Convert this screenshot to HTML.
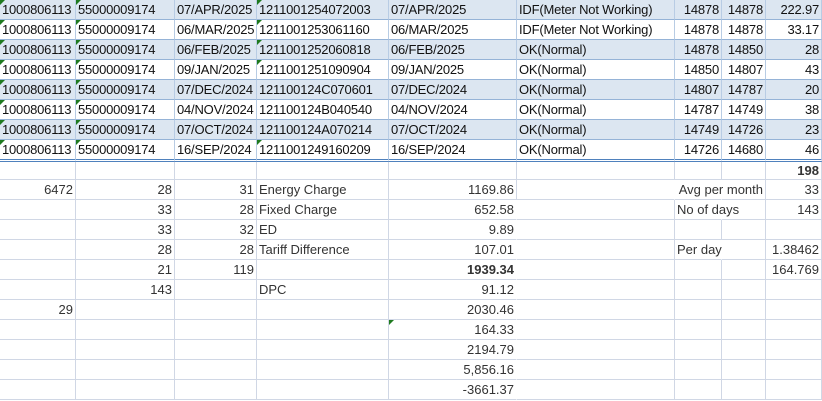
<!DOCTYPE html>
<html><head><meta charset="utf-8"><style>
*{box-sizing:border-box;margin:0;padding:0}
body{width:822px;height:401px;overflow:hidden;background:#fff;font-family:"Liberation Sans",Arial,sans-serif;font-size:13px;color:#111}
.r{display:flex;height:20px}
.c{height:20px;border-right:1px solid #d0d7e5;border-bottom:1px solid #d0d7e5;padding:0 2px;line-height:19px;white-space:nowrap;overflow:hidden;position:relative}
.t .c{border-right-color:#b8cce4;border-bottom-color:#95b3d7;letter-spacing:-0.2px}
.t.b{background:#dce6f1}
.c:nth-child(1){width:76px}.c:nth-child(2){width:99px}.c:nth-child(3){width:82px}.c:nth-child(4){width:132px}.c:nth-child(5){width:128px}.c:nth-child(6){width:158px}.c:nth-child(7){width:47px}.c:nth-child(8){width:44px}.c:nth-child(9){width:56px}
.R{text-align:right}
.g::before{content:"";position:absolute;left:0;top:0;border-top:5px solid #1f7a1f;border-right:5px solid transparent}
.nr{border-right-color:transparent!important}
.ov{overflow:visible;z-index:2}
.last .c{border-bottom:3px double #4f81bd!important}
.l .c{color:#333}
b{font-weight:bold}
</style></head><body>
<div class="r t b"><div class="c g">1000806113</div><div class="c g">55000009174</div><div class="c">07/APR/2025</div><div class="c g">1211001254072003</div><div class="c">07/APR/2025</div><div class="c">IDF(Meter Not Working)</div><div class="c R">14878</div><div class="c R">14878</div><div class="c R">222.97</div></div>
<div class="r t"><div class="c g">1000806113</div><div class="c g">55000009174</div><div class="c">06/MAR/2025</div><div class="c g">1211001253061160</div><div class="c">06/MAR/2025</div><div class="c">IDF(Meter Not Working)</div><div class="c R">14878</div><div class="c R">14878</div><div class="c R">33.17</div></div>
<div class="r t b"><div class="c g">1000806113</div><div class="c g">55000009174</div><div class="c">06/FEB/2025</div><div class="c g">1211001252060818</div><div class="c">06/FEB/2025</div><div class="c">OK(Normal)</div><div class="c R">14878</div><div class="c R">14850</div><div class="c R">28</div></div>
<div class="r t"><div class="c g">1000806113</div><div class="c g">55000009174</div><div class="c">09/JAN/2025</div><div class="c g">1211001251090904</div><div class="c">09/JAN/2025</div><div class="c">OK(Normal)</div><div class="c R">14850</div><div class="c R">14807</div><div class="c R">43</div></div>
<div class="r t b"><div class="c g">1000806113</div><div class="c g">55000009174</div><div class="c">07/DEC/2024</div><div class="c">121100124C070601</div><div class="c">07/DEC/2024</div><div class="c">OK(Normal)</div><div class="c R">14807</div><div class="c R">14787</div><div class="c R">20</div></div>
<div class="r t"><div class="c g">1000806113</div><div class="c g">55000009174</div><div class="c">04/NOV/2024</div><div class="c">121100124B040540</div><div class="c">04/NOV/2024</div><div class="c">OK(Normal)</div><div class="c R">14787</div><div class="c R">14749</div><div class="c R">38</div></div>
<div class="r t b"><div class="c g">1000806113</div><div class="c g">55000009174</div><div class="c">07/OCT/2024</div><div class="c">121100124A070214</div><div class="c">07/OCT/2024</div><div class="c">OK(Normal)</div><div class="c R">14749</div><div class="c R">14726</div><div class="c R">23</div></div>
<div class="r t last" style="height:22px"><div class="c g" style="height:22px">1000806113</div><div class="c g" style="height:22px">55000009174</div><div class="c" style="height:22px">16/SEP/2024</div><div class="c g" style="height:22px">1211001249160209</div><div class="c" style="height:22px">16/SEP/2024</div><div class="c" style="height:22px">OK(Normal)</div><div class="c R" style="height:22px">14726</div><div class="c R" style="height:22px">14680</div><div class="c R" style="height:22px">46</div></div>
<div class="l">
<div class="r" style="height:18px"><div class="c" style="height:18px"></div><div class="c" style="height:18px"></div><div class="c" style="height:18px"></div><div class="c" style="height:18px"></div><div class="c" style="height:18px"></div><div class="c" style="height:18px"></div><div class="c" style="height:18px"></div><div class="c" style="height:18px"></div><div class="c R" style="height:18px;line-height:17px"><b>198</b></div></div>
<div class="r"><div class="c R">6472</div><div class="c R">28</div><div class="c R">31</div><div class="c">Energy Charge</div><div class="c R">1169.86</div><div class="c nr"></div><div class="c nr"></div><div class="c R" style="overflow:visible;direction:rtl">Avg per month</div><div class="c R">33</div></div>
<div class="r"><div class="c"></div><div class="c R">33</div><div class="c R">28</div><div class="c">Fixed Charge</div><div class="c R nr">652.58</div><div class="c"></div><div class="c nr ov">No of days</div><div class="c"></div><div class="c R">143</div></div>
<div class="r"><div class="c"></div><div class="c R">33</div><div class="c R">32</div><div class="c">ED</div><div class="c R nr">9.89</div><div class="c"></div><div class="c"></div><div class="c"></div><div class="c"></div></div>
<div class="r"><div class="c"></div><div class="c R">28</div><div class="c R">28</div><div class="c">Tariff Difference</div><div class="c R nr">107.01</div><div class="c"></div><div class="c nr ov">Per day</div><div class="c"></div><div class="c R">1.38462</div></div>
<div class="r"><div class="c"></div><div class="c R">21</div><div class="c R">119</div><div class="c"></div><div class="c R nr"><b>1939.34</b></div><div class="c"></div><div class="c"></div><div class="c"></div><div class="c R">164.769</div></div>
<div class="r"><div class="c"></div><div class="c R">143</div><div class="c"></div><div class="c">DPC</div><div class="c R nr">91.12</div><div class="c"></div><div class="c"></div><div class="c"></div><div class="c"></div></div>
<div class="r"><div class="c R">29</div><div class="c"></div><div class="c"></div><div class="c"></div><div class="c R nr">2030.46</div><div class="c"></div><div class="c"></div><div class="c"></div><div class="c"></div></div>
<div class="r"><div class="c"></div><div class="c"></div><div class="c"></div><div class="c"></div><div class="c R nr g">164.33</div><div class="c"></div><div class="c"></div><div class="c"></div><div class="c"></div></div>
<div class="r"><div class="c"></div><div class="c"></div><div class="c"></div><div class="c"></div><div class="c R nr">2194.79</div><div class="c"></div><div class="c"></div><div class="c"></div><div class="c"></div></div>
<div class="r"><div class="c"></div><div class="c"></div><div class="c"></div><div class="c"></div><div class="c R nr">5,856.16</div><div class="c"></div><div class="c"></div><div class="c"></div><div class="c"></div></div>
<div class="r"><div class="c"></div><div class="c"></div><div class="c"></div><div class="c"></div><div class="c R nr">-3661.37</div><div class="c"></div><div class="c"></div><div class="c"></div><div class="c"></div></div>
</div>
</body></html>
